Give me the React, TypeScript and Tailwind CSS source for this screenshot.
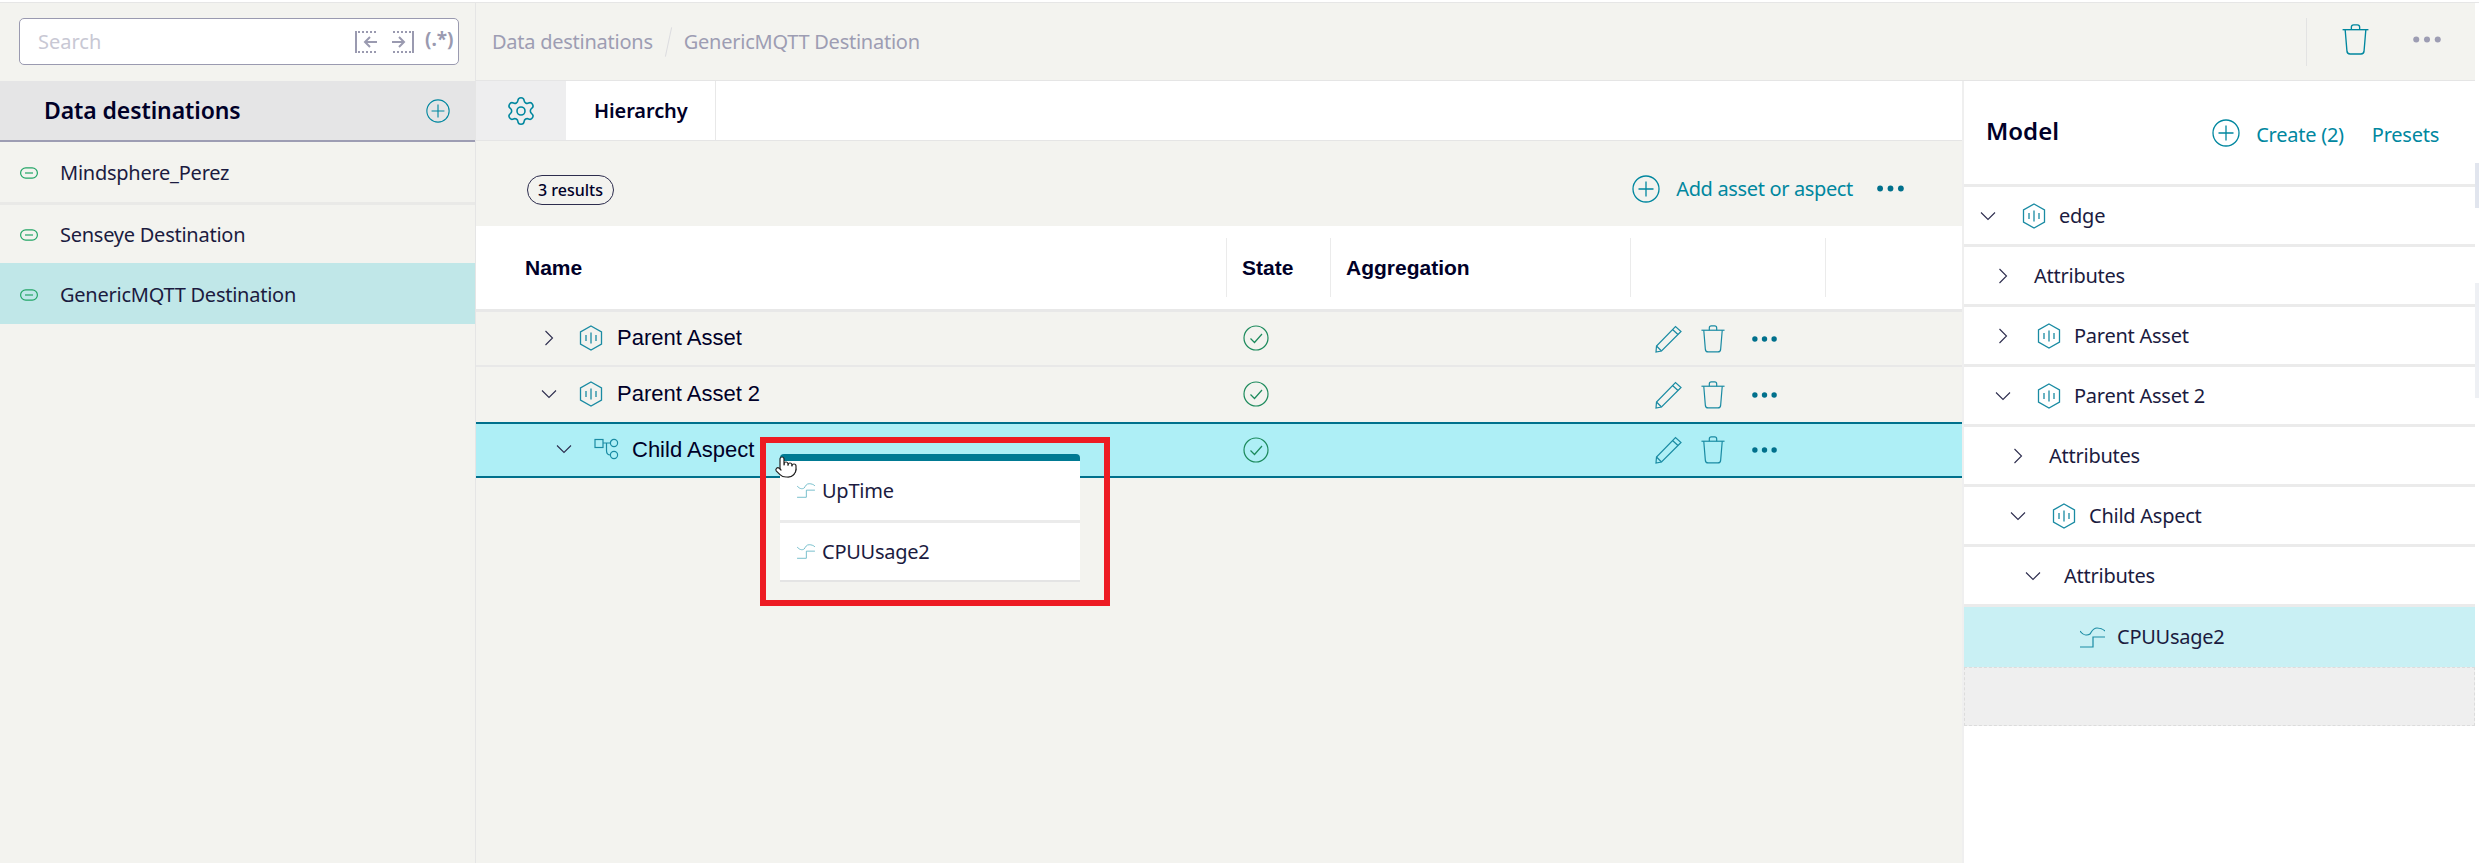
import { Pointer, Settings } from "lucide-react";

const sans = "font-['Noto_Sans',sans-serif]";
const body = "font-['Noto_Sans',sans-serif] text-[20px] tracking-[-0.25px]";
const arial = "font-['Liberation_Sans',Arial,sans-serif]";

const Chevron = ({ open }: { open?: boolean }) => (
  <svg viewBox="0 0 20 20" className="w-5 h-5 shrink-0 text-[#2d2d4e]" fill="none" stroke="currentColor" strokeWidth="1.1">
    {open ? <path d="M3 6.500l7 7 7-7" /> : <path d="M6.500 3l7 7-7 7" />}
  </svg>
);

const HexIcon = () => (
  <svg viewBox="0 0 24 26" className="w-6 h-[26px] shrink-0 text-[#1a8ba3]" fill="none" stroke="currentColor" strokeWidth="1.3">
    <path d="M12 1l10.500 6v12L12 25 1.500 19V7z" />
    <path d="M7 10v6M12 7.500v11M17 10v6" />
  </svg>
);

const AspectIcon = () => (
  <svg viewBox="0 0 25 22" className="w-[25px] h-[22px] shrink-0 text-[#1a8ba3]" fill="none" stroke="currentColor" strokeWidth="1.2">
    <rect x="1" y="1.500" width="8" height="8" />
    <circle cx="20" cy="5" r="3.600" />
    <circle cx="20" cy="17" r="3.600" />
    <path d="M9 5h7.400M12.500 5v7.500c0 3 1.500 4.500 4 4.500" />
  </svg>
);

const VariableIcon = ({ className }: { className: string }) => (
  <svg viewBox="0 0 25 21" className={className} fill="none" stroke="currentColor" strokeWidth="1.2">
    <path d="M0 4C3 8 7 9 10 7C12 4 13 1 17 1C20 1 23 2 25 4" />
    <path d="M25 10H13V20H0" />
  </svg>
);

const PlusCircle = ({ className }: { className: string }) => (
  <svg viewBox="0 0 28 28" className={className} fill="none" stroke="currentColor" strokeWidth="1.3">
    <circle cx="14" cy="14" r="13" />
    <path d="M14 6.500v15M6.500 14h15" />
  </svg>
);

const Trash = ({ className }: { className: string }) => (
  <svg viewBox="0 0 26 30" className={className} fill="none" stroke="currentColor" strokeWidth="1.3">
    <path d="M0.500 5.500h25" />
    <path d="M9 5.500V3c0-1.200 1-2.200 2.200-2.200h3.600C16 .8 17 1.800 17 3v2.500" />
    <path d="M3 5.500l1.700 20.500c.1 1.800 1.300 3 3 3h10.600c1.700 0 2.900-1.200 3-3L23 5.500" />
  </svg>
);

const Pencil = () => (
  <svg viewBox="0 0 27 28" className="w-[27px] h-7 text-[#1a8ba3]" fill="none" stroke="currentColor" strokeWidth="1.2">
    <path d="M1 27l.5-6L20.500 1.500 26 6.500 6.500 26z" />
    <path d="M1.500 21l5 5M17.500 4.500l5.500 5" />
  </svg>
);

const Dots = ({ className }: { className: string }) => (
  <svg viewBox="0 0 26 6" className={className} fill="currentColor">
    <circle cx="3" cy="3" r="2.800" />
    <circle cx="13" cy="3" r="2.800" />
    <circle cx="23" cy="3" r="2.800" />
  </svg>
);

const CheckCircle = () => (
  <svg viewBox="0 0 26 26" className="w-[26px] h-[26px] text-[#1c8a5c]" fill="none" stroke="currentColor" strokeWidth="1.2">
    <circle cx="13" cy="13" r="12" />
    <path d="M7.500 13.500l4 4 7.500-8.500" />
  </svg>
);

const LinkIcon = () => (
  <svg viewBox="0 0 18 12" className="w-[18px] h-3 shrink-0 text-[#22a566]" fill="none" stroke="currentColor" strokeWidth="1.2">
    <rect x="0.600" y="0.800" width="16.800" height="10.400" rx="5.200" />
    <path d="M5 6h8" />
  </svg>
);

const SearchPrev = ({ flip }: { flip?: boolean }) => (
  <svg viewBox="0 0 24 22" className={`w-6 h-[22px] text-[#9a9ab0] ${flip ? "-scale-x-100" : ""}`} fill="none" stroke="currentColor">
    <path d="M1 0v22" strokeWidth="2" />
    <path d="M3 1h20M3 21h20" strokeWidth="2" strokeDasharray="2 2" />
    <path d="M22 11H10M15 6l-5 5 5 5" strokeWidth="2" />
  </svg>
);

const destinations = [
  { name: "Mindsphere_Perez", row: "h-[58px] border-b-[3px] border-[#e9e9e7] box-content" },
  { name: "Senseye Destination", row: "h-[58px]" },
  { name: "GenericMQTT Destination", row: "h-[61px] bg-[#c0e7e8]" },
];

const Sidebar = () => (
  <div className="w-[476px] shrink-0 bg-[#f3f3ef] border-r border-[#e5e5e5] flex flex-col">
    <div className="h-[78px] pt-[15px] pl-[19px]">
      <div className="w-[440px] h-[47px] bg-white border border-[#9a9ab0] rounded-[5px] flex items-center pl-[18px] pr-[7px]">
        <span className={`${sans} text-[20px] text-[#c8c8d4] flex-1`}>Search</span>
        <SearchPrev />
        <span className="w-[11px]" />
        <SearchPrev flip />
        <span className={`${sans} text-[19px] font-bold text-[#9a9ab0] ml-[11px] mb-[4px] w-[26px] whitespace-nowrap`}>(.*)</span>
      </div>
    </div>
    <div className="h-[61px] bg-[#e5e5e6] border-b-2 border-[#9d9db3] flex items-center justify-between pl-[44px] pr-[25px]">
      <span className={`${sans} text-[23px] font-semibold tracking-[-0.1px] text-[#000028]`}>Data destinations</span>
      <PlusCircle className="w-6 h-6 text-[#00879f]" />
    </div>
    {destinations.map((d) => (
      <div key={d.name} className={`${d.row} flex items-center pl-5 pt-[2px]`}>
        <LinkIcon />
        <span className={`${body} text-[#1b1b3f] ml-[22px]`}>{d.name}</span>
      </div>
    ))}
  </div>
);

const TopBar = () => (
  <div className="h-[78px] shrink-0 bg-[#f3f3ef] border-b border-[#e5e5e5] flex items-center pl-4 pr-[34px]">
    <span className={`${body} text-[#9d9db3]`}>Data destinations</span>
    <span className="w-px h-[30px] bg-[#dcdce0] rotate-12 mx-[15px]" />
    <span className={`${body} text-[#9d9db3]`}>GenericMQTT Destination</span>
    <div className="flex-1" />
    <span className="w-px h-12 bg-[#e3e3e3] mr-[35px]" />
    <Trash className="w-[27px] h-[31px] text-[#00879f] mr-[44px] mb-[4px]" />
    <Dots className="w-[28px] h-[7px] text-[#9d9db3] mb-[4px]" />
  </div>
);

const cols = "grid grid-cols-[750px_104px_300px_195px_1fr]";
const headCell = `${arial} font-bold text-[21px] text-[#000028] pl-[15px] border-l border-[#ebebeb] h-[59px] flex items-center`;

const tableRows = [
  { name: "Parent Asset", open: false, rowCls: "h-[53px] border-b-2 border-[#e8e8e8] box-content", pad: "pl-[63px]", icon: <HexIcon />, textCls: "ml-[14px]" },
  { name: "Parent Asset 2", open: true, rowCls: "h-[55px]", pad: "pl-[63px]", icon: <HexIcon />, textCls: "ml-[14px]" },
  { name: "Child Aspect", open: true, rowCls: "h-[56px] bg-[#aeeff6] border-y-2 border-[#00708c]", pad: "pl-[78px]", icon: <AspectIcon />, textCls: "ml-[13px]" },
];

const HierarchyTable = () => (
  <div>
    <div className={`${cols} h-[83px] bg-white border-b-[3px] border-[#e8e8e8] box-content items-center`}>
      <div className={`${arial} font-bold text-[21px] text-[#000028] pl-[49px]`}>Name</div>
      <div className={headCell}>State</div>
      <div className={headCell}>Aggregation</div>
      <div className="border-l border-[#ebebeb] h-[59px]" />
      <div className="border-l border-[#ebebeb] h-[59px]" />
    </div>
    {tableRows.map((r) => (
      <div key={r.name} className={`${cols} ${r.rowCls} items-center`}>
        <div className={`flex items-center ${r.pad} mb-[2px]`}>
          <Chevron open={r.open} />
          <span className="ml-5">{r.icon}</span>
          <span className={`${arial} text-[22px] text-[#000028] ${r.textCls}`}>{r.name}</span>
        </div>
        <div className="pl-[17px] flex mb-[1px]">
          <CheckCircle />
        </div>
        <div />
        <div className="flex items-center pl-[25px]">
          <Pencil />
          <Trash className="w-[24px] h-[28px] text-[#1a8ba3] ml-[19px]" />
          <Dots className="w-[25px] h-[6px] text-[#00708c] ml-[27px]" />
        </div>
      </div>
    ))}
  </div>
);

const PopupItem = ({ label, cls }: { label: string; cls: string }) => (
  <div className={`${cls} flex items-center pl-[17px]`}>
    <VariableIcon className="w-[18px] h-[15px] text-[#62b5c4] shrink-0" />
    <span className={`${body} text-[#1b1b3f] ml-[7px]`}>{label}</span>
  </div>
);

const DragOverlay = () => (
  <div className="absolute left-[284px] top-[356px] w-[350px] h-[169px] border-[6px] border-[#ed1c24]">
    <div className="absolute left-[14px] top-[11px] w-[300px] h-[126px] bg-white rounded-t-[4px] border-t-[7px] border-[#007a93] shadow-[0_2px_0_#e4e4e4]">
      <PopupItem label="UpTime" cls="h-[59px] border-b-[3px] border-[#ebebeb] box-content" />
      <PopupItem label="CPUUsage2" cls="h-[57px]" />
    </div>
    <Pointer className="absolute left-[8px] top-[11px] w-[24px] h-[26px] text-[#222] fill-white" strokeWidth={1.2} />
  </div>
);

const MainPanel = () => (
  <div className="w-[1486px] shrink-0 relative flex flex-col bg-[#f3f3ef]">
    <div className="h-[60px] bg-white border-b border-[#e5e5e5] flex">
      <div className="w-[90px] bg-[#eeeeef] flex items-center justify-center">
        <Settings className="w-[32px] h-[32px] text-[#00879f]" strokeWidth={1.2} />
      </div>
      <div className="w-[150px] border-r border-[#e8e8e8] flex items-center pl-[28px]">
        <span className={`${sans} text-[20px] font-semibold tracking-[-0.1px] text-[#000028]`}>Hierarchy</span>
      </div>
    </div>
    <div className="h-[85px] flex items-center pl-[51px] pr-[58px] pt-[10px]">
      <span className={`${sans} h-[30px] w-[87px] mt-[3px] border border-[#2d2d4e] rounded-[15px] flex items-center justify-center text-[16px] font-medium text-[#000028]`}>3 results</span>
      <div className="flex-1" />
      <PlusCircle className="w-7 h-7 text-[#00879f] mr-4" />
      <span className={`${sans} text-[20px] tracking-[-0.35px] text-[#00879f] mr-6`}>Add asset or aspect</span>
      <Dots className="w-[27px] h-[7px] text-[#00708c]" />
    </div>
    <HierarchyTable />
    <DragOverlay />
  </div>
);

const modelRows = [
  { name: "edge", pad: "pl-[14px]", open: true, icon: true },
  { name: "Attributes", pad: "pl-[29px]", open: false, icon: false },
  { name: "Parent Asset", pad: "pl-[29px]", open: false, icon: true },
  { name: "Parent Asset 2", pad: "pl-[29px]", open: true, icon: true },
  { name: "Attributes", pad: "pl-[44px]", open: false, icon: false },
  { name: "Child Aspect", pad: "pl-[44px]", open: true, icon: true },
  { name: "Attributes", pad: "pl-[59px]", open: true, icon: false },
];

const ModelPanel = () => (
  <div className="flex-1 bg-white border-l-2 border-[#efefef] flex flex-col">
    <div className="h-[106px] shrink-0 border-b-[3px] border-[#ebebeb] flex items-center pl-[22px] pr-[36px]">
      <span className={`${sans} text-[24px] font-semibold text-[#000028] mb-[3px]`}>Model</span>
      <div className="flex-1" />
      <PlusCircle className="w-7 h-7 text-[#00879f] mr-4" />
      <span className={`${body} text-[#00879f] mr-7 mt-[4px]`}>Create (2)</span>
      <span className={`${body} text-[#00879f] mt-[4px]`}>Presets</span>
    </div>
    {modelRows.map((r, i) => (
      <div key={i} className={`h-[60px] shrink-0 border-b-[3px] border-[#ebebeb] flex items-center ${r.pad}`}>
        <Chevron open={r.open} />
        {r.icon && <span className="ml-6"><HexIcon /></span>}
        <span className={`${body} text-[#1b1b3f] ${r.icon ? "ml-[13px]" : "ml-[21px]"}`}>{r.name}</span>
      </div>
    ))}
    <div className="h-[60px] shrink-0 bg-[#c9f0f4] flex items-center pl-[116px]">
      <VariableIcon className="w-[25px] h-[21px] text-[#1a8ba3] shrink-0" />
      <span className={`${body} text-[#1b1b3f] ml-3`}>CPUUsage2</span>
    </div>
    <div className="h-[59px] shrink-0 bg-[#efefef] border border-dashed border-[#dcdcdc]" />
  </div>
);

const ScrollStrip = () => (
  <div className="w-1 shrink-0 bg-white flex flex-col">
    <div className="h-[160px]" />
    <div className="h-[45px] bg-[#e1e5ee]" />
    <div className="h-[75px]" />
    <div className="h-[115px] bg-[#eef0f4]" />
  </div>
);

export default function App() {
  return (
    <div className="w-[2479px] h-[863px] bg-white overflow-hidden flex flex-col">
      <div className="h-[3px] shrink-0 bg-white border-b border-[#e6e6e6]" />
      <div className="flex flex-1 min-h-0">
        <Sidebar />
        <div className="w-[1999px] flex flex-col">
          <TopBar />
          <div className="flex flex-1 min-h-0">
            <MainPanel />
            <ModelPanel />
          </div>
        </div>
        <ScrollStrip />
      </div>
    </div>
  );
}
